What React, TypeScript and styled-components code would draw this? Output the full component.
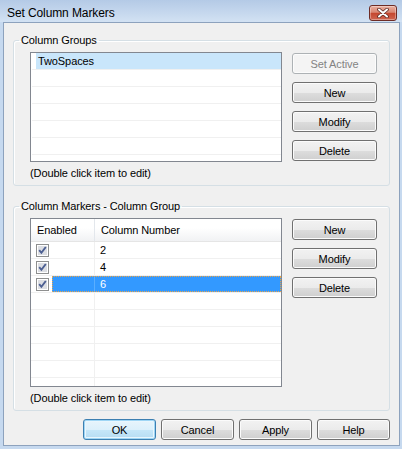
import React from "react"
import styled, { createGlobalStyle, css } from "styled-components"

/////////////////////////////////////////////////////////////////////////////

const GROUPS = ["TwoSpaces"]

const MARKERS = [
  { enabled: true, column: 2 },
  { enabled: true, column: 4 },
  { enabled: true, column: 6 },
]

const SELECTED_MARKER = 2

/////////////////////////////////////////////////////////////////////////////

const CheckIcon: React.FC = () => (
  <svg width="13" height="13" viewBox="0 0 13 13">
    <rect x="0.5" y="0.5" width="12" height="12" fill="#ffffff" stroke="#8e8f8f" />
    <rect x="2" y="2" width="9" height="9" fill="#dcdee3" />
    <path d="M3.2 6.2 L5.4 8.8 L9.8 3" stroke="#4c5f92" strokeWidth="1.9" fill="none" />
  </svg>
)

const CloseGlyph: React.FC = () => (
  <svg width="14" height="10" viewBox="0 0 14 10">
    <path d="M3 1.5 L11 8.5 M11 1.5 L3 8.5" stroke="#5b2a24" strokeWidth="3.6" strokeLinecap="round" />
    <path d="M3 1.5 L11 8.5 M11 1.5 L3 8.5" stroke="#ffffff" strokeWidth="2" strokeLinecap="round" />
  </svg>
)

const App: React.FC = () => {
  const emptyGroupRows = 7 - GROUPS.length
  const emptyMarkerRows = 9 - MARKERS.length

  return (
    <>
      <GlobalStyle />
      <Window>
        <TitleBar>
          <Title>Set Column Markers</Title>
          <CloseButton>
            <CloseGlyph />
          </CloseButton>
        </TitleBar>

        <Client>
          <Group>
            <Legend>Column Groups</Legend>
            <GroupBody>
              <ListBox $height={110}>
                {GROUPS.map((name, i) => (
                  <ListRow key={name}>
                    <ListItem $selected={i === 0}>{name}</ListItem>
                  </ListRow>
                ))}
                {Array.from({ length: emptyGroupRows }).map((_, i) => (
                  <ListRow key={"e" + i} />
                ))}
              </ListBox>
              <ButtonColumn>
                <Button disabled>Set Active</Button>
                <Button>New</Button>
                <Button>Modify</Button>
                <Button>Delete</Button>
              </ButtonColumn>
              <Hint>(Double click item to edit)</Hint>
            </GroupBody>
          </Group>

          <Group>
            <Legend>Column Markers - Column Group</Legend>
            <GroupBody>
              <ListBox $height={169}>
                <HeaderRow>
                  <HeaderCell $width={64}>Enabled</HeaderCell>
                  <HeaderCell $width={0}>Column Number</HeaderCell>
                </HeaderRow>
                {MARKERS.map((m, i) => (
                  <DataRow key={m.column}>
                    <CheckCell>{m.enabled && <CheckIcon />}</CheckCell>
                    <RowBody $selected={i === SELECTED_MARKER}>
                      <Spacer $selected={i === SELECTED_MARKER} />
                      <NumberCell>{m.column}</NumberCell>
                    </RowBody>
                  </DataRow>
                ))}
                {Array.from({ length: emptyMarkerRows }).map((_, i) => (
                  <DataRow key={"e" + i}>
                    <CheckCell />
                    <RowBody>
                      <Spacer />
                    </RowBody>
                  </DataRow>
                ))}
              </ListBox>
              <ButtonColumn>
                <Button>New</Button>
                <Button>Modify</Button>
                <Button>Delete</Button>
              </ButtonColumn>
              <Hint>(Double click item to edit)</Hint>
            </GroupBody>
          </Group>

          <Footer>
            <Button $primary $width={73}>OK</Button>
            <Button $width={73}>Cancel</Button>
            <Button $width={73}>Apply</Button>
            <Button $width={73}>Help</Button>
          </Footer>
        </Client>
      </Window>
    </>
  )
}

/////////////////////////////////////////////////////////////////////////////

const GlobalStyle = createGlobalStyle`
  html, body {
    margin: 0;
    padding: 0;
    background: #c6d9ef;
  }
  body {
    font-family: "Liberation Sans", Arial, sans-serif;
    font-size: 11px;
    letter-spacing: -0.1px;
    color: #000;
  }
  *, *::before, *::after {
    box-sizing: border-box;
  }
`

const Window = styled.div`
  width: 402px;
  height: 449px;
  display: flex;
  flex-direction: column;
  background: #c6d9ef;
  overflow: hidden;
`

const TitleBar = styled.div`
  height: 22px;
  flex: none;
  display: flex;
  align-items: flex-start;
  justify-content: space-between;
  padding: 0 5px 0 7px;
  background: linear-gradient(180deg, #b4cae6 0%, #c6d8ee 60%, #d3e2f3 100%);
`

const Title = styled.div`
  padding-top: 5px;
  line-height: 16px;
  font-size: 12px;
  color: #000;
`

const CloseButton = styled.div`
  margin-top: 5px;
  width: 28px;
  height: 16px;
  border: 1px solid #6e2c25;
  border-radius: 3px;
  display: flex;
  align-items: center;
  justify-content: center;
  background: linear-gradient(
    180deg,
    #eab0a1 0%,
    #d98672 45%,
    #c5472f 52%,
    #cf6550 100%
  );
  box-shadow: inset 0 0 0 1px rgba(255, 255, 255, 0.35);
`

const Client = styled.div`
  flex: 1;
  margin: 0 2px 3px 3px;
  border: 1px solid #8da2bd;
  background: #f0f0f0;
  padding: 9px 9px 5px 9px;
  display: flex;
  flex-direction: column;
  gap: 12px;
`

const Group = styled.fieldset`
  margin: 0;
  padding: 0;
  min-width: 0;
  border: 1px solid #d5dfe5;
  border-radius: 3px;
  box-shadow: inset 1px 1px 0 #ffffff;
`

const Legend = styled.legend`
  margin-left: 5px;
  padding: 0 2px;
  line-height: 16px;
  color: #000;
`

const GroupBody = styled.div`
  display: grid;
  grid-template-columns: 252px 85px;
  grid-template-areas:
    "list buttons"
    "hint .";
  column-gap: 10px;
  row-gap: 3px;
  padding: 4px 12px 4px 16px;
`

const ListBox = styled.div<{ $height: number }>`
  grid-area: list;
  height: ${(p) => p.$height}px;
  border: 1px solid #828790;
  background: #ffffff;
  overflow: hidden;
`

const ListRow = styled.div`
  height: 17px;
  margin-left: 1px;
  padding-left: 4px;
  border-bottom: 1px solid #f0f0f0;
  display: flex;
`

const ListItem = styled.div<{ $selected?: boolean }>`
  flex: 1;
  padding-left: 2px;
  line-height: 16px;
  ${(p) =>
    p.$selected &&
    css`
      background: #c9e6fb;
    `}
`

const HeaderRow = styled.div`
  height: 23px;
  display: flex;
  border-bottom: 1px solid #e5e5e5;
  background: linear-gradient(180deg, #ffffff 0%, #ffffff 40%, #f1f2f4 100%);
`

const HeaderCell = styled.div<{ $width: number }>`
  ${(p) =>
    p.$width
      ? css`
          width: ${p.$width}px;
          border-right: 1px solid #e3e7ec;
        `
      : css`
          flex: 1;
        `}
  padding-left: 6px;
  line-height: 22px;
`

const DataRow = styled.div`
  height: 17px;
  display: flex;
  border-bottom: 1px solid #f0f0f0;
`

const CheckCell = styled.div`
  width: 21px;
  flex: none;
  padding-left: 5px;
  display: flex;
  align-items: center;
`

const RowBody = styled.div<{ $selected?: boolean }>`
  flex: 1;
  display: flex;
  ${(p) =>
    p.$selected &&
    css`
      background: #3399ff;
      color: #ffffff;
      outline: 1px dotted #e9a54a;
      outline-offset: -1px;
    `}
`

const Spacer = styled.div<{ $selected?: boolean }>`
  width: 43px;
  flex: none;
  border-right: 1px solid ${(p) => (p.$selected ? "#5aaeff" : "#f0f0f0")};
`

const NumberCell = styled.div`
  padding-left: 5px;
  line-height: 16px;
`

const ButtonColumn = styled.div`
  grid-area: buttons;
  display: flex;
  flex-direction: column;
  gap: 8px;
  padding-top: 1px;
`

const Hint = styled.div`
  grid-area: hint;
  line-height: 16px;
`

const Footer = styled.div`
  display: flex;
  justify-content: flex-end;
  gap: 5px;
  margin-top: -4px;
`

const Button = styled.button<{ $primary?: boolean; $width?: number }>`
  width: ${(p) => (p.$width ? `${p.$width}px` : "100%")};
  height: 21px;
  padding: 0;
  font-family: inherit;
  font-size: 11px;
  letter-spacing: inherit;
  color: #000;
  border: 1px solid #707070;
  border-radius: 3px;
  background: linear-gradient(
    180deg,
    #f2f2f2 0%,
    #ebebeb 50%,
    #dddddd 51%,
    #cfcfcf 100%
  );
  box-shadow: inset 0 0 0 1px #fbfbfb;

  ${(p) =>
    p.$primary &&
    css`
      border-color: #3c7fb1;
      background: linear-gradient(
        180deg,
        #e8f5fc 0%,
        #dcf0fb 50%,
        #c6e7f9 51%,
        #b5dcf3 100%
      );
      box-shadow: inset 0 0 0 1px #9fd6f5, inset 0 0 0 2px #e9f6fd;
    `}

  &:disabled {
    color: #838383;
    border-color: #adb2b5;
    background: #f4f4f4;
    box-shadow: inset 0 0 0 1px #fcfcfc;
  }
`

export default App
